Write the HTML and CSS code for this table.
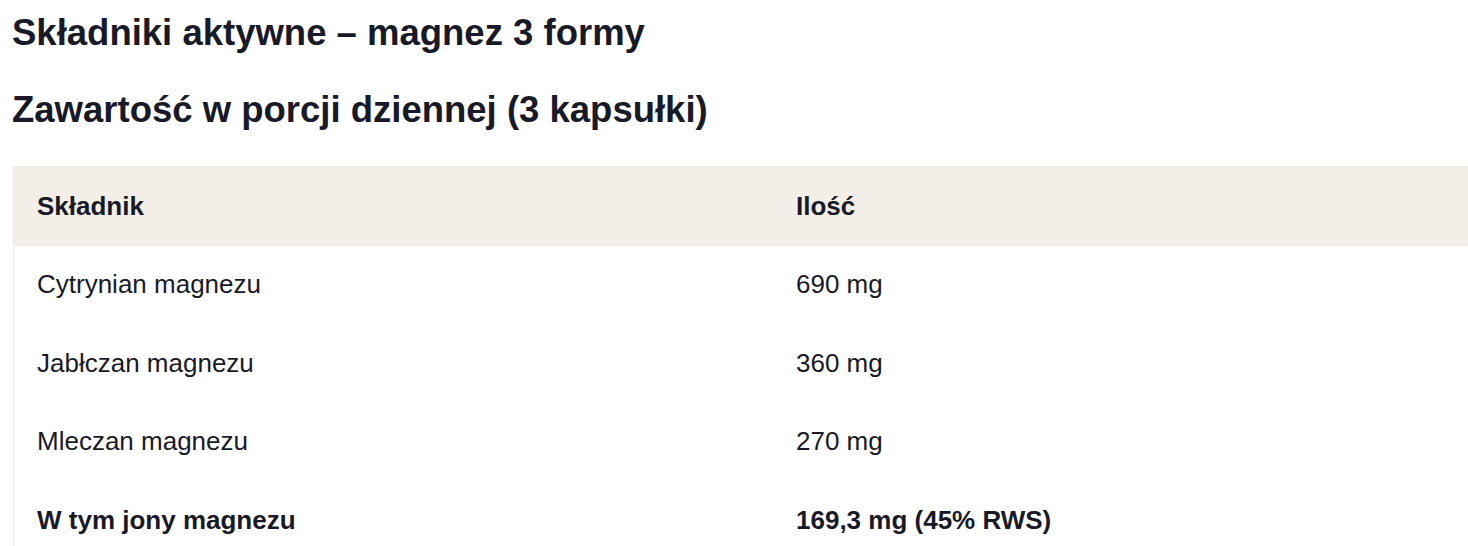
FILE: index.html
```html
<!DOCTYPE html>
<html lang="pl">
<head>
<meta charset="utf-8">
<link rel="stylesheet" href="styles.css">
</head>
<body>
<div class="page">
  <h2 class="title">Składniki aktywne – magnez 3 formy</h2>
  <h2 class="title second">Zawartość w porcji dziennej (3 kapsułki)</h2>
  <div class="table">
    <div class="row head">
      <div class="cell">Składnik</div>
      <div class="cell">Ilość</div>
    </div>
    <div class="row">
      <div class="cell">Cytrynian magnezu</div>
      <div class="cell">690 mg</div>
    </div>
    <div class="row">
      <div class="cell">Jabłczan magnezu</div>
      <div class="cell">360 mg</div>
    </div>
    <div class="row">
      <div class="cell">Mleczan magnezu</div>
      <div class="cell">270 mg</div>
    </div>
    <div class="row total">
      <div class="cell">W tym jony magnezu</div>
      <div class="cell">169,3 mg (45% RWS)</div>
    </div>
  </div>
</div>
</body>
</html>
```
FILE: styles.css
```css
html, body {
  margin: 0;
  padding: 0;
  background: #ffffff;
}
body {
  font-family: "Liberation Sans", Arial, sans-serif;
  color: #191a28;
  overflow: hidden;
}
.page {
  padding: 13px 0 0 12px;
}
.title {
  margin: 0;
  font-size: 36.5px;
  font-weight: 700;
  line-height: 40px;
}
.title.second {
  margin-top: 37px;
}
.table {
  margin-top: 36px;
  margin-left: 1px;
  width: 1480px;
  border-left: 1px solid #ececec;
  border-top: 1px solid #efede8;
}
.row {
  display: grid;
  grid-template-columns: 759px 1fr;
  height: 78.5px;
  align-items: center;
}
.row.head {
  background: #f3efe8;
  font-weight: 700;
}
.cell {
  padding-left: 23px;
  font-size: 26px;
}
.total {
  font-weight: 700;
}
```
